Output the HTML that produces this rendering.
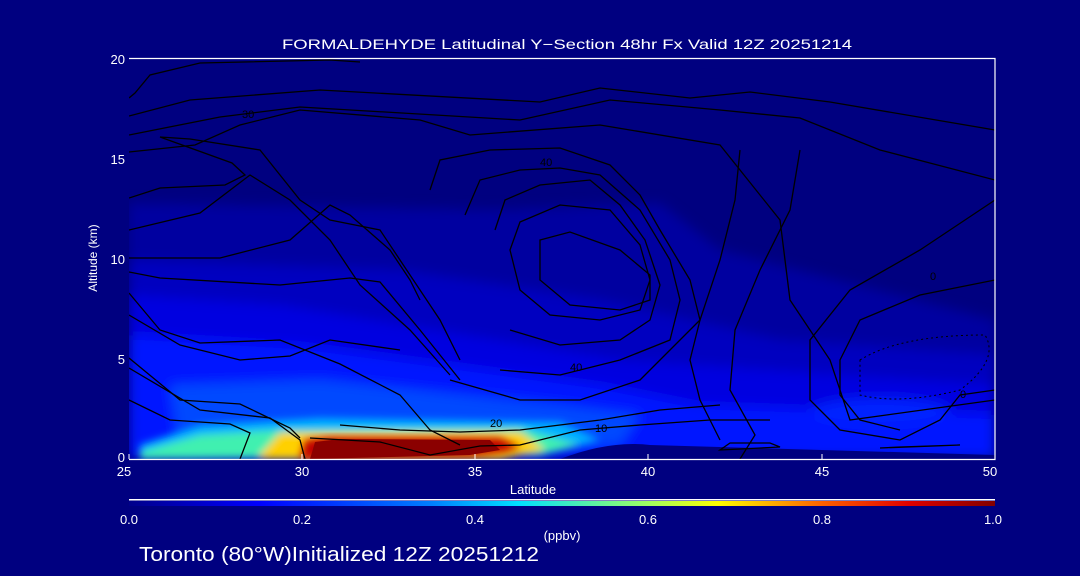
<!DOCTYPE html>
<html><head><meta charset="utf-8"><style>
html,body{margin:0;padding:0;background:#000080;width:1080px;height:576px;overflow:hidden}
svg{display:block}
text{font-family:"Liberation Sans",sans-serif;fill:#fff}
</style></head><body>
<svg width="1080" height="576" viewBox="0 0 1080 576" xmlns="http://www.w3.org/2000/svg">
<defs>
<filter id="b" x="-10%" y="-10%" width="120%" height="120%"><feGaussianBlur stdDeviation="6"/></filter>
<filter id="b2" x="-10%" y="-20%" width="120%" height="140%"><feGaussianBlur stdDeviation="4"/></filter>
<linearGradient id="cb" x1="0" x2="1">
<stop offset="0" stop-color="#00008a"/><stop offset="0.15" stop-color="#0000ff"/><stop offset="0.35" stop-color="#0080ff"/><stop offset="0.45" stop-color="#00e0ff"/><stop offset="0.6" stop-color="#a0ff60"/><stop offset="0.68" stop-color="#ffff00"/><stop offset="0.8" stop-color="#ff6000"/><stop offset="0.9" stop-color="#e00000"/><stop offset="1" stop-color="#800000"/>
</linearGradient>
<clipPath id="pc"><rect x="129" y="58" width="866" height="401"/></clipPath>
</defs>
<g clip-path="url(#pc)">
<rect x="129" y="58" width="866" height="401" fill="#000080"/>
<g filter="url(#b)">
<polygon points="129,203 500,210 660,203 720,250 995,320 995,459 129,459" fill="#0000a0"/>
<polygon points="129,260 400,270 600,300 780,340 995,355 995,459 129,459" fill="#0000c0"/>
<polygon points="129,295 280,305 620,360 995,385 995,459 129,459" fill="#0000e0"/>
<polygon points="129,335 300,345 600,385 700,405 995,415 995,459 129,459" fill="#0014ff"/>
<polygon points="170,385 320,380 560,405 640,415 620,445 180,450" fill="#0048ff"/>
<ellipse cx="880" cy="412" rx="70" ry="14" fill="#0020ff"/>
</g>
<g filter="url(#b2)">
<polygon points="140,445 200,425 320,418 560,422 600,440 560,450 140,455" fill="#00b0ff"/>
<polygon points="140,452 200,435 280,430 520,428 580,445 540,455 140,459" fill="#40f0b0"/>
<polygon points="260,455 280,433 520,432 545,450 500,459 260,459" fill="#ffd000"/>
</g>
<polygon points="300,459 305,440 330,437 500,438 520,447 505,452 470,456 300,459" fill="#c00000" filter="url(#b2)"/>
<polygon points="310,459 315,442 340,439 490,440 500,450 470,455 310,459" fill="#8b0000"/>
<path d="M560,459 Q610,440 650,445 L995,455 L995,459Z" fill="#000080"/>
<g fill="none" stroke="#000" stroke-width="1.3">
<path d="M129,98 L135,93 L150,75 L200,63 L330,60 L360,62"/>
<path d="M129,116 L190,100 L320,90 L540,102 L600,88 L690,98 L750,92 L830,102 L995,130"/>
<path d="M129,135 L220,117 L300,107 L520,120 L610,100 L720,110 L800,118 L880,150 L995,180"/>
<path d="M129,152 L195,145 L240,125 L300,110 L420,120 L470,135 L600,125 L720,145 L780,220 L790,300 L830,360 L850,420 L995,400"/>
<path d="M129,198 L160,188 L225,185 L245,175 L232,163 L160,137 L190,139 L260,150 L300,200 L330,220 L380,230 L400,260 L420,290 L440,320 L460,360"/>
<path d="M129,230 L200,213 L250,175 L290,200 L330,240 L360,285 L410,330 L450,375"/>
<path d="M129,258 L220,258 L290,240 L330,205 L350,215 L390,250 L410,280 L420,300"/>
<path d="M129,272 L160,278 L280,285 L350,278 L380,282 L420,330 L460,380"/>
<path d="M129,293 L160,330 L200,343 L280,340 L340,364 L400,395 L430,430 L460,445"/>
<path d="M129,315 L180,345 L240,360 L290,356 L330,340 L400,350"/>
<path d="M129,358 L180,400 L240,404 L290,428 L300,438"/>
<path d="M129,368 L200,410 L270,418 L300,440 L305,459"/>
<path d="M129,400 L170,420 L230,424 L250,433 L240,459"/>
<path d="M310,438 L380,442 L430,455 L480,446 L520,445 L580,430 L640,425 L710,420 L770,420"/>
<path d="M340,425 L400,430 L460,432 L520,430 L600,420 L660,410 L720,405"/>
<path d="M430,190 L440,160 L490,150 L560,148 L610,165 L640,195 L660,230 L690,280 L700,320 L660,360 L640,380 L580,400 L520,400 L450,380"/>
<path d="M465,215 L480,180 L520,170 L560,168 L600,175 L640,210 L670,260 L680,300 L670,340 L620,360 L560,375 L500,370"/>
<path d="M495,230 L505,200 L540,185 L590,180 L620,205 L645,240 L660,285 L650,320 L620,340 L560,345 L510,330"/>
<path d="M510,250 L520,222 L560,205 L610,210 L640,245 L650,280 L640,310 L600,320 L550,315 L520,290 Z"/>
<path d="M540,240 L570,232 L620,250 L650,275 L650,300 L620,310 L570,305 L540,280 Z"/>
<path d="M740,150 L735,200 L720,260 L700,320 L690,360 L700,400 L720,440"/>
<path d="M800,150 L790,210 L760,270 L735,330 L730,390 L755,435 L740,459"/>
<path d="M995,200 L920,250 L850,290 L810,340 L810,400 L840,430 L900,440 L940,420 L960,395 L995,390"/>
<path d="M995,280 L920,295 L860,320 L840,360 L840,395 L860,420 L900,430"/>
<path d="M720,450 L780,447 L770,443 L730,443 Z"/>
<path d="M880,448 L960,445 L900,447 Z"/>
</g>
<path d="M860,360 Q900,335 985,335 Q1000,360 960,390 Q900,405 860,395 Z" fill="none" stroke="#000" stroke-width="1" stroke-dasharray="2,3"/>
</g>
<g font-size="11">
<text x="242" y="118" style="fill:#000">30</text><text x="540" y="166" style="fill:#000">40</text><text x="490" y="427" style="fill:#000">20</text><text x="595" y="432" style="fill:#000">10</text><text x="570" y="371" style="fill:#000">40</text><text x="960" y="398" style="fill:#000">0</text><text x="930" y="280" style="fill:#000">0</text>
</g>
<g stroke="#fff" stroke-width="1.2" fill="none">
<path d="M129,58.5 H995 V459.5 H129"/>
</g>
<g stroke="#fff" stroke-width="1">
<path d="M129,459 v-5 M302,459 v-5 M475,459 v-5 M648,459 v-5 M822,459 v-5 M995,459 v-5"/>
</g>
<g font-size="13">
<text x="124" y="476" text-anchor="middle">25</text><text x="302" y="476" text-anchor="middle">30</text><text x="475" y="476" text-anchor="middle">35</text><text x="648" y="476" text-anchor="middle">40</text><text x="822" y="476" text-anchor="middle">45</text><text x="990" y="476" text-anchor="middle">50</text>
<text x="533" y="494" text-anchor="middle">Latitude</text>
<text x="125" y="64" text-anchor="end">20</text><text x="125" y="164" text-anchor="end">15</text><text x="125" y="264" text-anchor="end">10</text><text x="125" y="364" text-anchor="end">5</text><text x="125" y="462" text-anchor="end">0</text>
<text x="97" y="258" text-anchor="middle" transform="rotate(-90 97 258)" font-size="12">Altitude (km)</text>
<text x="282" y="49" font-size="14" textLength="570" lengthAdjust="spacingAndGlyphs">FORMALDEHYDE Latitudinal Y−Section 48hr  Fx Valid 12Z 20251214</text>
</g>
<rect x="129" y="499" width="866" height="1.5" fill="#fff"/>
<rect x="129" y="501" width="866" height="5" fill="url(#cb)"/>
<g font-size="13">
<text x="129" y="524" text-anchor="middle">0.0</text><text x="302" y="524" text-anchor="middle">0.2</text><text x="475" y="524" text-anchor="middle">0.4</text><text x="648" y="524" text-anchor="middle">0.6</text><text x="822" y="524" text-anchor="middle">0.8</text><text x="993" y="524" text-anchor="middle">1.0</text>
<text x="562" y="540" text-anchor="middle">(ppbv)</text>
</g>
<text x="139" y="561" font-size="20" textLength="400" lengthAdjust="spacingAndGlyphs">Toronto (80°W)Initialized 12Z 20251212</text>
</svg>
</body></html>
